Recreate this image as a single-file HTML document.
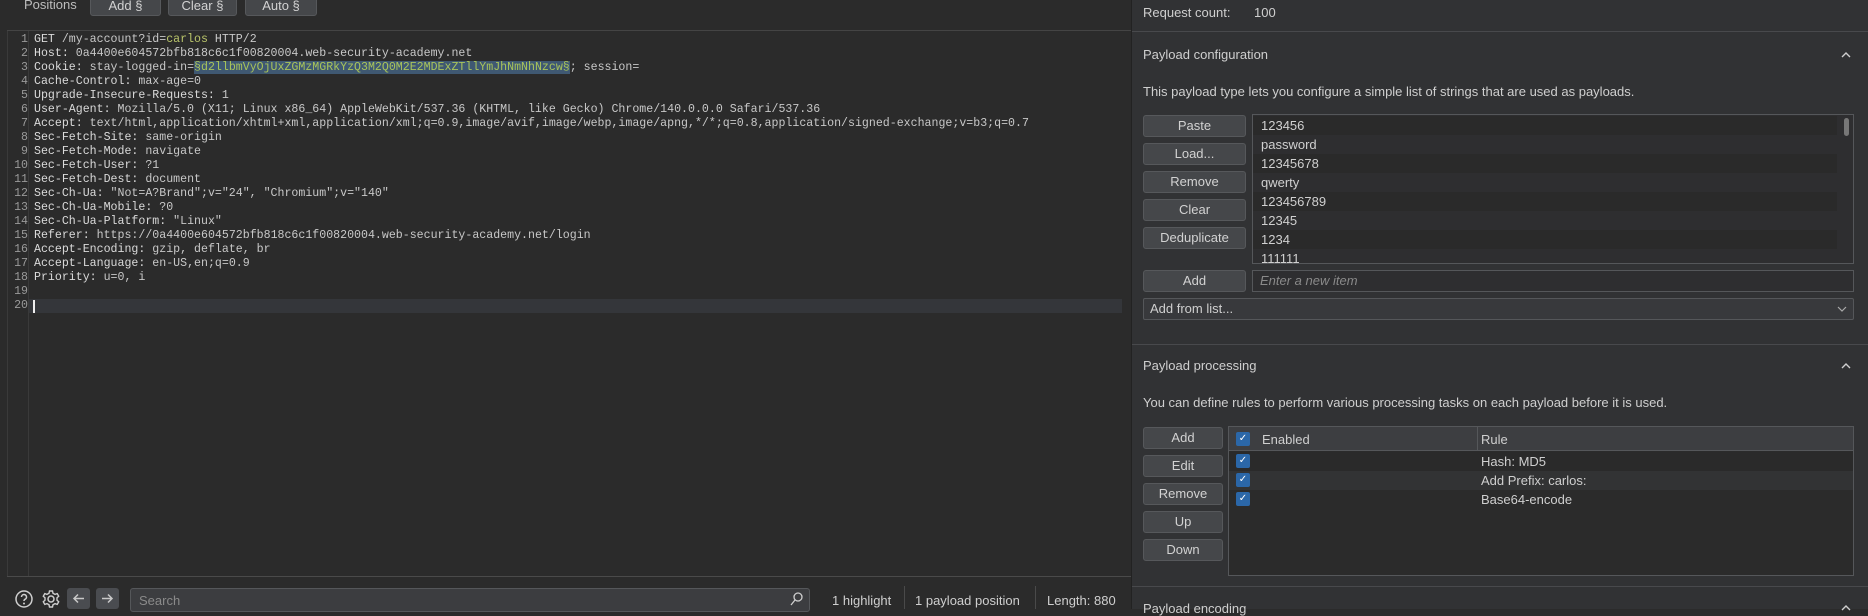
<!DOCTYPE html>
<html><head><meta charset="utf-8">
<style>
*{box-sizing:border-box;margin:0;padding:0}
body{width:1868px;height:609px;background:#2b2b2b;font-family:"Liberation Sans",sans-serif;color:#cfcfcf;position:relative;overflow:hidden;font-size:13px}
.a{position:absolute}
.btn{position:absolute;background:#45474a;border:1px solid #56585b;border-radius:3px;color:#d2d2d2;text-align:center;font-size:13px;line-height:20px}
.code{position:absolute;left:34px;top:33px;font-family:"Liberation Mono",monospace;font-size:11.6px;line-height:14px;color:#c8c8c8;white-space:pre}
.ln{position:absolute;left:8px;top:33px;width:20px;text-align:right;font-family:"Liberation Mono",monospace;font-size:11.6px;line-height:14px;color:#9a9a9a;white-space:pre}
.k{color:#dadada}
.y{color:#b9c46a}
.sel{background:#3f5872;color:#a9c45a}
.txt{position:absolute;font-size:13px;color:#cfcfcf;white-space:nowrap}
.row{position:absolute;left:0;right:16px;height:19px;padding-left:8px;line-height:19px;font-size:13px;color:#d0d0d0}
.cb{position:absolute;width:14px;height:14px;background:#2b67a8;border-radius:2px;color:#fff;font-size:10px;line-height:14px;text-align:center}
.sep{position:absolute;height:1px;background:#46474a}
</style></head><body>
<div class="a" style="left:0;top:0;width:1131px;height:609px;background:#2b2b2b"></div>
<div class="txt" style="left:24px;top:-3px;color:#bdbdbd">Positions</div>
<div class="btn" style="left:90px;top:-4px;width:71px;height:20px;line-height:18px">Add §</div>
<div class="btn" style="left:168px;top:-4px;width:69px;height:20px;line-height:18px">Clear §</div>
<div class="btn" style="left:245px;top:-4px;width:72px;height:20px;line-height:18px">Auto §</div>
<div class="sep" style="left:7px;top:30px;width:1124px;background:#444"></div>
<div class="a" style="left:7px;top:31px;width:1px;height:545px;background:#3a3a3a"></div>
<div class="a" style="left:28px;top:31px;width:1px;height:545px;background:#3a3a3a"></div>
<div class="a" style="left:29px;top:299px;width:1093px;height:14px;background:#34363a"></div>
<div class="a" style="left:33px;top:300px;width:2px;height:13px;background:#eee"></div>
<div class="ln">1
2
3
4
5
6
7
8
9
10
11
12
13
14
15
16
17
18
19
20</div>
<div class="code"><span class="k">GET</span> /my-account?id=<span class="y">carlos</span> HTTP/2
<span class="k">Host:</span> 0a4400e604572bfb818c6c1f00820004.web-security-academy.net
<span class="k">Cookie:</span> stay-logged-in=<span class="sel">§d2llbmVyOjUxZGMzMGRkYzQ3M2Q0M2E2MDExZTllYmJhNmNhNzcw§</span>; session=
<span class="k">Cache-Control:</span> max-age=0
<span class="k">Upgrade-Insecure-Requests:</span> 1
<span class="k">User-Agent:</span> Mozilla/5.0 (X11; Linux x86_64) AppleWebKit/537.36 (KHTML, like Gecko) Chrome/140.0.0.0 Safari/537.36
<span class="k">Accept:</span> text/html,application/xhtml+xml,application/xml;q=0.9,image/avif,image/webp,image/apng,*/*;q=0.8,application/signed-exchange;v=b3;q=0.7
<span class="k">Sec-Fetch-Site:</span> same-origin
<span class="k">Sec-Fetch-Mode:</span> navigate
<span class="k">Sec-Fetch-User:</span> ?1
<span class="k">Sec-Fetch-Dest:</span> document
<span class="k">Sec-Ch-Ua:</span> "Not=A?Brand";v="24", "Chromium";v="140"
<span class="k">Sec-Ch-Ua-Mobile:</span> ?0
<span class="k">Sec-Ch-Ua-Platform:</span> "Linux"
<span class="k">Referer:</span> https://0a4400e604572bfb818c6c1f00820004.web-security-academy.net/login
<span class="k">Accept-Encoding:</span> gzip, deflate, br
<span class="k">Accept-Language:</span> en-US,en;q=0.9
<span class="k">Priority:</span> u=0, i

</div>
<div class="sep" style="left:7px;top:576px;width:1124px;background:#4a4a4a"></div>
<svg class="a" style="left:14px;top:589px" width="48" height="20" viewBox="0 0 48 20">
<circle cx="10" cy="10" r="8" fill="none" stroke="#cfcfcf" stroke-width="1.5"/>
<path d="M7.5 8a2.5 2.5 0 1 1 3.5 2.3c-.8.4-1 .9-1 1.7" fill="none" stroke="#cfcfcf" stroke-width="1.5"/>
<circle cx="10" cy="14.5" r="1" fill="#cfcfcf"/>
<circle cx="37" cy="10" r="3" fill="none" stroke="#cfcfcf" stroke-width="1.5"/>
<path d="M35.5 2h3l.5 2.3 2 1.1 2.2-.8 1.5 2.6-1.7 1.6v2.4l1.7 1.6-1.5 2.6-2.2-.8-2 1.1-.5 2.3h-3l-.5-2.3-2-1.1-2.2.8-1.5-2.6 1.7-1.6V8.8l-1.7-1.6 1.5-2.6 2.2.8 2-1.1z" fill="none" stroke="#cfcfcf" stroke-width="1.4"/>
</svg>
<div class="a" style="left:67px;top:588px;width:23px;height:21px;background:#4a4c50;border-radius:3px"></div>
<div class="a" style="left:96px;top:588px;width:23px;height:21px;background:#4a4c50;border-radius:3px"></div>
<svg class="a" style="left:67px;top:588px" width="52" height="21"><path d="M17 10.5H7M11 6.5l-4 4 4 4" stroke="#c8c8c8" stroke-width="1.5" fill="none"/><path d="M35 10.5h10M41 6.5l4 4-4 4" stroke="#c8c8c8" stroke-width="1.5" fill="none"/></svg>
<div class="a" style="left:130px;top:588px;width:680px;height:24px;background:#3c3d40;border:1px solid #55575a;border-radius:3px"></div>
<div class="txt" style="left:139px;top:593px;color:#8a8a8a">Search</div>
<svg class="a" style="left:790px;top:591px" width="14" height="16"><circle cx="8" cy="6" r="4" fill="none" stroke="#cfcfcf" stroke-width="1.3"/><path d="M5 9l-4 5" stroke="#cfcfcf" stroke-width="1.3"/></svg>
<div class="txt" style="left:832px;top:593px">1 highlight</div>
<div class="a" style="left:904px;top:586px;width:1px;height:23px;background:#4a4a4a"></div>
<div class="txt" style="left:915px;top:593px">1 payload position</div>
<div class="a" style="left:1035px;top:586px;width:1px;height:23px;background:#4a4a4a"></div>
<div class="txt" style="left:1047px;top:593px">Length: 880</div>
<div class="a" style="left:1131px;top:0;width:737px;height:609px;background:#313234;border-left:1px solid #222"></div>
<div class="txt" style="left:1143px;top:5px">Request count:</div>
<div class="txt" style="left:1254px;top:5px">100</div>
<div class="sep" style="left:1132px;top:31px;width:736px;background:#48494c"></div>
<div class="txt" style="left:1143px;top:47px">Payload configuration</div>
<svg class="a" style="left:1840px;top:50px" width="12" height="10"><path d="M2 7l4-4 4 4" stroke="#cfcfcf" stroke-width="1.4" fill="none"/></svg>
<div class="txt" style="left:1143px;top:84px">This payload type lets you configure a simple list of strings that are used as payloads.</div>
<div class="btn" style="left:1143px;top:115px;width:103px;height:22px">Paste</div>
<div class="btn" style="left:1143px;top:143px;width:103px;height:22px">Load...</div>
<div class="btn" style="left:1143px;top:171px;width:103px;height:22px">Remove</div>
<div class="btn" style="left:1143px;top:199px;width:103px;height:22px">Clear</div>
<div class="btn" style="left:1143px;top:227px;width:103px;height:22px">Deduplicate</div>
<div class="a" style="left:1252px;top:114px;width:602px;height:150px;border:1px solid #55575a;background:#2e2e30;overflow:hidden">
<div class="row" style="top:1px;background:#2a2a2a">123456</div>
<div class="row" style="top:20px">password</div>
<div class="row" style="top:39px;background:#2a2a2a">12345678</div>
<div class="row" style="top:58px">qwerty</div>
<div class="row" style="top:77px;background:#2a2a2a">123456789</div>
<div class="row" style="top:96px">12345</div>
<div class="row" style="top:115px;background:#2a2a2a">1234</div>
<div class="row" style="top:134px">111111</div>
<div class="a" style="right:4px;top:3px;width:5px;height:18px;background:#777;border-radius:3px"></div>
</div>
<div class="btn" style="left:1143px;top:270px;width:103px;height:22px">Add</div>
<div class="a" style="left:1252px;top:270px;width:602px;height:22px;border:1px solid #55575a;background:#2e2e30"></div>
<div class="txt" style="left:1260px;top:273px;color:#8a8a8a;font-style:italic">Enter a new item</div>
<div class="a" style="left:1143px;top:298px;width:711px;height:22px;border:1px solid #55575a;background:#38393c;border-radius:2px"></div>
<div class="txt" style="left:1150px;top:301px">Add from list...</div>
<svg class="a" style="left:1836px;top:304px" width="12" height="10"><path d="M2 3l4 4 4-4" stroke="#aaa" stroke-width="1.2" fill="none"/></svg>
<div class="sep" style="left:1132px;top:344px;width:736px;background:#48494c"></div>
<div class="txt" style="left:1143px;top:358px">Payload processing</div>
<svg class="a" style="left:1840px;top:361px" width="12" height="10"><path d="M2 7l4-4 4 4" stroke="#cfcfcf" stroke-width="1.4" fill="none"/></svg>
<div class="txt" style="left:1143px;top:395px">You can define rules to perform various processing tasks on each payload before it is used.</div>
<div class="btn" style="left:1143px;top:427px;width:80px;height:22px">Add</div>
<div class="btn" style="left:1143px;top:455px;width:80px;height:22px">Edit</div>
<div class="btn" style="left:1143px;top:483px;width:80px;height:22px">Remove</div>
<div class="btn" style="left:1143px;top:511px;width:80px;height:22px">Up</div>
<div class="btn" style="left:1143px;top:539px;width:80px;height:22px">Down</div>
<div class="a" style="left:1228px;top:426px;width:626px;height:150px;border:1px solid #55575a;background:#2b2b2b"></div>
<div class="a" style="left:1229px;top:427px;width:624px;height:24px;background:#3d3e41;border-bottom:1px solid #55575a"></div>
<div class="a" style="left:1477px;top:427px;width:1px;height:24px;background:#55575a"></div>
<div class="cb" style="left:1236px;top:432px">✓</div>
<div class="txt" style="left:1262px;top:432px">Enabled</div>
<div class="txt" style="left:1481px;top:432px">Rule</div>
<div class="a" style="left:1229px;top:452px;width:624px;height:19px;background:#2a2a2a"></div>
<div class="a" style="left:1229px;top:471px;width:624px;height:19px;background:#323334"></div>
<div class="cb" style="left:1236px;top:454px">✓</div>
<div class="cb" style="left:1236px;top:473px">✓</div>
<div class="cb" style="left:1236px;top:492px">✓</div>
<div class="txt" style="left:1481px;top:454px">Hash: MD5</div>
<div class="txt" style="left:1481px;top:473px">Add Prefix: carlos:</div>
<div class="txt" style="left:1481px;top:492px">Base64-encode</div>
<div class="sep" style="left:1132px;top:586px;width:736px;background:#48494c"></div>
<div class="txt" style="left:1143px;top:601px">Payload encoding</div>
<svg class="a" style="left:1840px;top:603px" width="12" height="10"><path d="M2 7l4-4 4 4" stroke="#cfcfcf" stroke-width="1.4" fill="none"/></svg>
</body></html>
